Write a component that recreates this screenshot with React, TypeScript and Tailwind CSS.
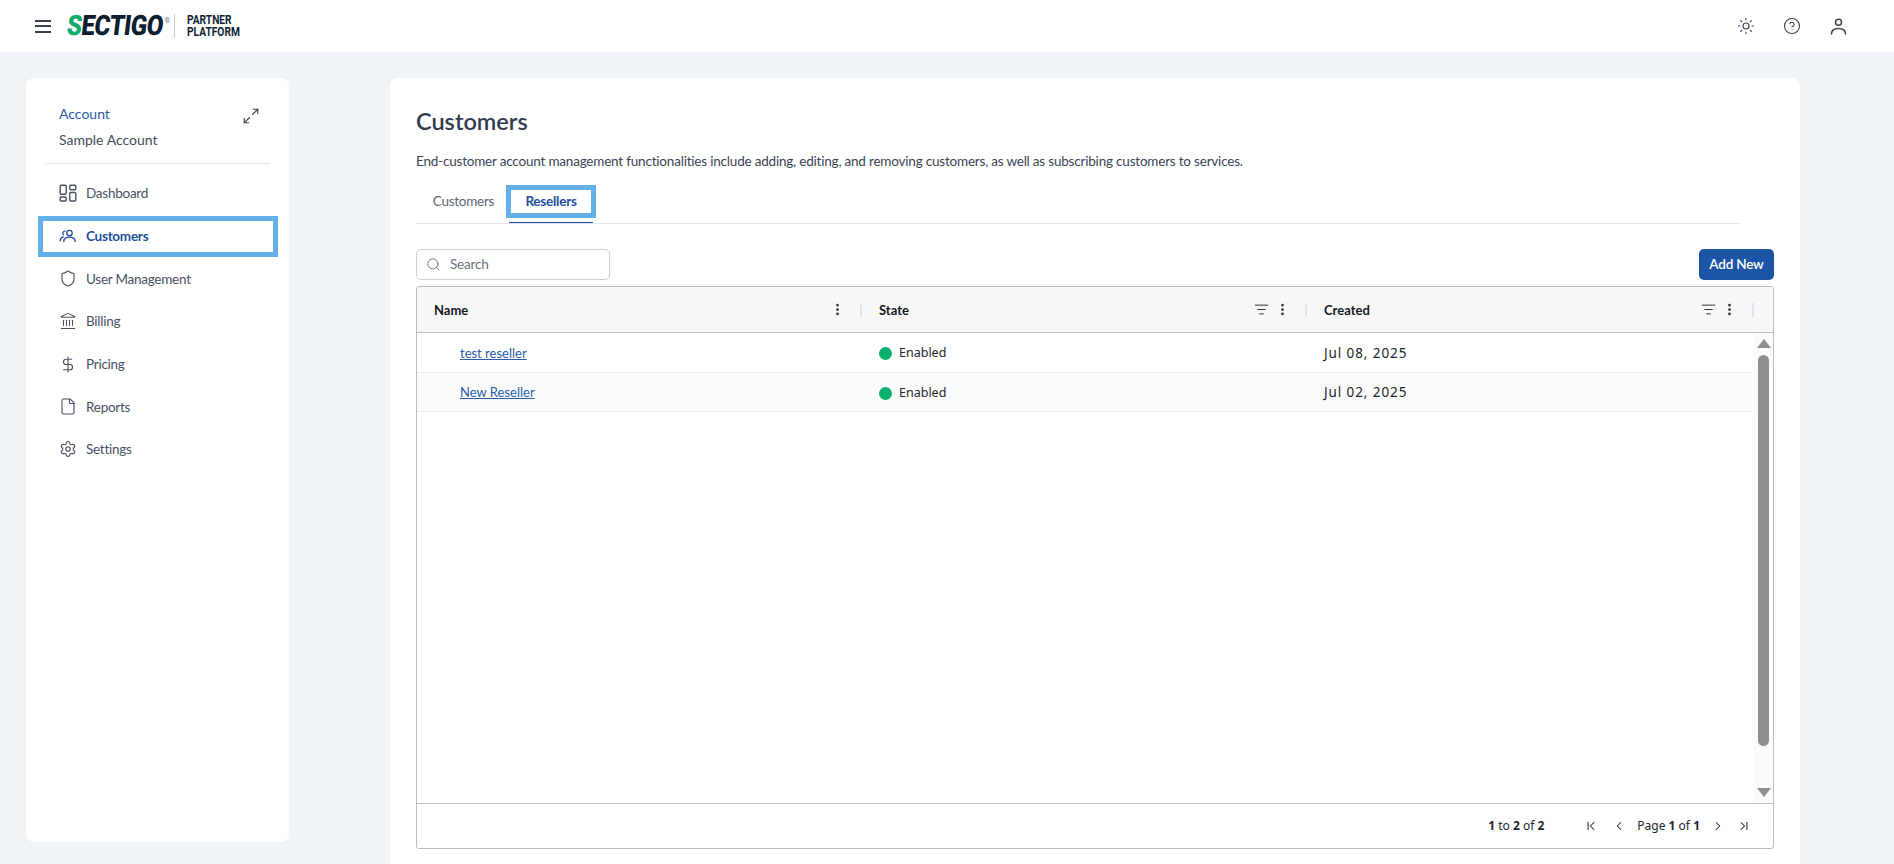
import {
  ChevronFirst,
  ChevronLast,
  ChevronLeft,
  ChevronRight,
  CircleHelp,
  DollarSign,
  EllipsisVertical,
  File,
  Landmark,
  ListFilter,
  Maximize2,
  Search,
  Settings,
  Shield,
  Sun,
} from 'lucide-react';

function DashboardIcon() {
  return (
    <svg width="18" height="18" viewBox="0 0 18 18" fill="none" stroke="currentColor" strokeWidth="1.4">
      <rect x="1.2" y="1.2" width="6" height="9" rx="1" />
      <rect x="10.8" y="1.2" width="6" height="4.5" rx="1" />
      <rect x="1.2" y="13" width="6" height="4" rx="1" />
      <rect x="10.8" y="8.5" width="6" height="8.5" rx="1" />
    </svg>
  );
}

function PeopleIcon() {
  return (
    <svg width="18" height="18" viewBox="0 0 18 18" fill="none" stroke="currentColor" strokeWidth="1.3" strokeLinecap="round">
      <circle cx="10.5" cy="6" r="2.7" />
      <path d="M4.8 14.6c0-2.8 2.4-4.4 5.7-4.4s5.7 1.6 5.7 4.4" />
      <path d="M6 4.2a2.2 2.2 0 0 0-1.6 3.7" />
      <path d="M1.2 13.8c0-2 1-3.3 3-3.9" />
    </svg>
  );
}

function PersonIcon() {
  return (
    <svg width="19" height="19" viewBox="0 0 19 19" fill="none" stroke="currentColor" strokeWidth="1.5" strokeLinecap="round">
      <circle cx="9.5" cy="5.2" r="3" />
      <path d="M2.5 17c0-3.8 3-5.6 7-5.6s7 1.8 7 5.6" />
    </svg>
  );
}

const navItems = [
  { label: 'Dashboard', icon: <DashboardIcon /> },
  { label: 'Customers', icon: <PeopleIcon />, active: true },
  { label: 'User Management', icon: <Shield size={19} strokeWidth={1.5} /> },
  { label: 'Billing', icon: <Landmark size={18} strokeWidth={1.4} /> },
  { label: 'Pricing', icon: <DollarSign size={19} strokeWidth={1.5} /> },
  { label: 'Reports', icon: <File size={19} strokeWidth={1.5} /> },
  { label: 'Settings', icon: <Settings size={18} strokeWidth={1.5} /> },
];

const rows = [
  { name: 'test reseller', state: 'Enabled', created: 'Jul 08, 2025' },
  { name: 'New Reseller', state: 'Enabled', created: 'Jul 02, 2025' },
];

function ColSep() {
  return <div className="h-[14px] w-[2px] bg-[#dfe3ec]" />;
}

function Header() {
  return (
    <header className="flex h-[52px] shrink-0 items-center justify-between bg-white pl-[35px] pr-[46px]">
      <div className="flex items-center">
        <div className="flex w-[16px] flex-col gap-[3.5px]">
          <div className="h-[2px] bg-[#374151]" />
          <div className="h-[2px] bg-[#374151]" />
          <div className="h-[2px] bg-[#374151]" />
        </div>
        <div className="ml-[16px] flex items-center">
          <span className="mr-[-15px] origin-left -skew-x-[8deg] scale-x-[0.86] font-['Roboto',sans-serif] text-[28px] font-black leading-none tracking-[-0.6px] text-[#0b1f33]">
            <span className="text-[#0fae6f]">S</span>ECTIGO
          </span>
          <span className="mb-[10px] ml-[1px] font-['Roboto',sans-serif] text-[7px] leading-none text-[#6b7280]">®</span>
          <div className="ml-[4px] h-[24px] w-px bg-[#c9cdd4]" />
          <div className="ml-[12px] origin-left scale-x-[0.85] font-['Roboto',sans-serif] text-[12px] font-bold leading-[12px] text-[#0b1f33]">
            <div>PARTNER</div>
            <div>PLATFORM</div>
          </div>
        </div>
      </div>
      <div className="flex items-center gap-[28px] text-[#3b4456]">
        <Sun size={18} strokeWidth={1.5} />
        <CircleHelp size={18} strokeWidth={1.5} />
        <PersonIcon />
      </div>
    </header>
  );
}

function Sidebar() {
  return (
    <aside className="h-[764px] w-[263px] shrink-0 rounded-lg bg-white px-[19px] pt-[23px]">
      <div className="flex justify-between border-b border-[#e2e5ea] pb-[10px] pl-[14px] pr-[10px]">
        <div className="text-[14px] leading-[26px]">
          <div className="text-[#2a5caa]">Account</div>
          <div className="text-[#444c5c]">Sample Account</div>
        </div>
        <Maximize2 size={18} strokeWidth={1.5} className="mt-[6px] text-[#3b4456]" />
      </div>
      <nav className="mt-[8px]">
        {navItems.map((item) => (
          <div
            key={item.label}
            className={`relative flex h-[42.7px] items-center gap-[9px] pl-[14px] text-[13.5px] tracking-[-0.25px] ${
              item.active ? 'font-bold text-[#1d4f9e]' : 'text-[#485163]'
            }`}
          >
            {item.active && (
              <div className="absolute -left-[7px] -right-[8px] top-[1px] h-[41px] border-[5px] border-[#64b0e8]" />
            )}
            <span className="flex w-[18px] justify-center">{item.icon}</span>
            {item.label}
          </div>
        ))}
      </nav>
    </aside>
  );
}

function ResellersTable() {
  return (
    <div className="mt-[6px] flex h-[563px] flex-col rounded-[3px] border border-[#b8bcc9] font-['Noto_Sans',sans-serif] text-[12.5px]">
      <div className="flex h-[46px] shrink-0 items-center border-b border-[#b8bcc9] bg-[#f7f7f8] font-['Lato',sans-serif] text-[13px] font-bold text-[#15191f]">
        <div className="flex w-[445px] items-center pl-[17px]">
          <span className="flex-1 pt-[2px]">Name</span>
          <EllipsisVertical size={15} strokeWidth={2.4} className="mr-[15px] text-[#333]" />
          <ColSep />
        </div>
        <div className="flex w-[445px] items-center pl-[17px]">
          <span className="flex-1 pt-[2px]">State</span>
          <ListFilter size={15} strokeWidth={1.6} className="mr-[6px] text-[#333]" />
          <EllipsisVertical size={15} strokeWidth={2.4} className="mr-[15px] text-[#333]" />
          <ColSep />
        </div>
        <div className="flex w-[447px] items-center pl-[17px]">
          <span className="flex-1 pt-[2px]">Created</span>
          <ListFilter size={15} strokeWidth={1.6} className="mr-[6px] text-[#333]" />
          <EllipsisVertical size={15} strokeWidth={2.4} className="mr-[15px] text-[#333]" />
          <ColSep />
        </div>
      </div>
      <div className="flex min-h-0 flex-1">
        <div className="flex-1">
          {rows.map((row, i) => (
            <div
              key={row.name}
              className={`flex h-[39.5px] items-center border-b border-[#eceef2] pt-[1px] text-[#22262e] ${i % 2 ? 'bg-[#fbfbfc]' : 'bg-white'}`}
            >
              <div className="w-[445px] pl-[43px] pt-[1px] font-['Lato',sans-serif] text-[13px]">
                <a className="text-[#2a5caa] underline">{row.name}</a>
              </div>
              <div className="flex w-[445px] items-center gap-[7px] pl-[17px] pt-[2px]">
                <span className="h-[13px] w-[13px] rounded-full bg-[#0bb26f]" />
                {row.state}
              </div>
              <div className="pl-[17px] text-[13.5px] tracking-[0.9px]">{row.created}</div>
            </div>
          ))}
        </div>
        <div className="flex w-[19px] shrink-0 flex-col items-center bg-[#fbfbfb] pt-[6px]">
          <div className="h-0 w-0 border-x-[7px] border-b-[9px] border-x-transparent border-b-[#8e8e8e]" />
          <div className="mt-[7px] h-[391px] w-[11px] rounded-full bg-[#8e8e8e]" />
          <div className="mt-[42px] h-0 w-0 border-x-[7px] border-t-[9px] border-x-transparent border-t-[#8e8e8e]" />
        </div>
      </div>
      <div className="flex h-[45px] shrink-0 items-center justify-end border-t border-[#b8bcc9] pr-[22px] text-[12px] text-[#22262e]">
        <span>
          <b>1</b> to <b>2</b> of <b>2</b>
        </span>
        <ChevronFirst size={14} strokeWidth={1.8} className="ml-[40px]" />
        <ChevronLeft size={14} strokeWidth={1.8} className="ml-[14px]" />
        <span className="mx-[11px]">
          Page <b>1</b> of <b>1</b>
        </span>
        <ChevronRight size={14} strokeWidth={1.8} />
        <ChevronLast size={14} strokeWidth={1.8} className="ml-[12px]" />
      </div>
    </div>
  );
}

export default function App() {
  return (
    <div className="flex h-[864px] flex-col overflow-hidden bg-[#f0f3f8] font-['Lato',sans-serif]">
      <Header />
      <div className="flex flex-1 pl-[26px] pt-[26px]">
        <Sidebar />
        <main className="ml-[101px] w-[1410px] rounded-t-lg bg-white pl-[26px] pr-[26px] pt-[27px]">
          <h1 className="text-[23.5px] font-semibold leading-[32px] text-[#333c4e]">Customers</h1>
          <p className="mt-[14px] text-[13.5px] leading-[20px] tracking-[-0.2px] text-[#3b4456]">
            End-customer account management functionalities include adding, editing, and removing customers, as well as subscribing customers to services.
          </p>
          <div className="relative mt-[15px] flex h-[38px] w-[1324px] border-b border-[#e2e5ea] pl-[2px] text-[13.5px] tracking-[-0.25px]">
            <div className="flex w-[91px] items-center justify-center pb-[6px] text-[#5c6576]">Customers</div>
            <div className="relative flex w-[84px] items-center justify-center border-b border-[#1d4f9e] pb-[6px] font-bold text-[#1d4f9e]">
              Resellers
              <div className="absolute -inset-x-[3px] -top-[1px] h-[33px] border-[5px] border-[#64b0e8]" />
            </div>
          </div>
          <div className="mt-[25px] flex h-[31px] items-center justify-between">
            <div className="flex h-[31px] w-[194px] items-center gap-[9px] rounded-[5px] border border-[#c9cfdb] pl-[9px] text-[13.5px] tracking-[-0.2px] text-[#6b7280]">
              <Search size={15} strokeWidth={1.5} />
              Search
            </div>
            <button className="flex h-[31px] w-[75px] items-center justify-center rounded-[5px] bg-[#1c55a5] text-[13.5px] font-semibold tracking-[-0.2px] text-white">
              Add New
            </button>
          </div>
          <ResellersTable />
        </main>
      </div>
    </div>
  );
}
